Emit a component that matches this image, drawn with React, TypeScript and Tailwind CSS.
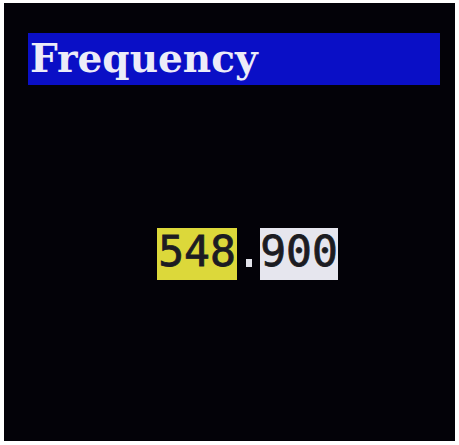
import React from 'react';

const FrequencyValue = ({ whole, fraction }: { whole: string; fraction: string }) => {
    return (
        <div className="flex items-stretch h-[52px] font-['DejaVu_Sans_Mono',monospace] text-[43px] leading-none text-[#1c1c22]">
            <div className="w-[80px] bg-[#dcd83a] flex items-center justify-center pb-[5px] [-webkit-text-stroke:0.8px_#1c1c22]">{whole}</div>
            {/* decimal point drawn as a square pixel dot */}
            <div className="w-[23px] flex items-end justify-center pb-[13px]">
                <div className="w-[6px] h-[8px] bg-[#e2e2ea]" />
            </div>
            <div className="w-[78px] bg-[#e6e6ee] flex items-center justify-center pb-[5px] [-webkit-text-stroke:0.8px_#1c1c22]">{fraction}</div>
        </div>
    );
};

const App: React.FC = () => {
    return (
        <div className="w-[459px] h-[445px] bg-white pt-[3px] pl-[4px] pr-[4px] pb-[4px]">
            <div className="w-full h-full bg-[#030208] pt-[30px] pl-[24px]">
                <div className="w-[412px] h-[52px] bg-[#0a0fc6] flex items-center pl-[2px]">
                    <span className="font-['DejaVu_Serif',serif] font-bold text-[39px] leading-none text-[#ececf8] pb-[2px]">
                        Frequency
                    </span>
                </div>
                <div className="mt-[143px] ml-[129px]">
                    <FrequencyValue whole="548" fraction="900" />
                </div>
            </div>
        </div>
    );
};

export default App;
